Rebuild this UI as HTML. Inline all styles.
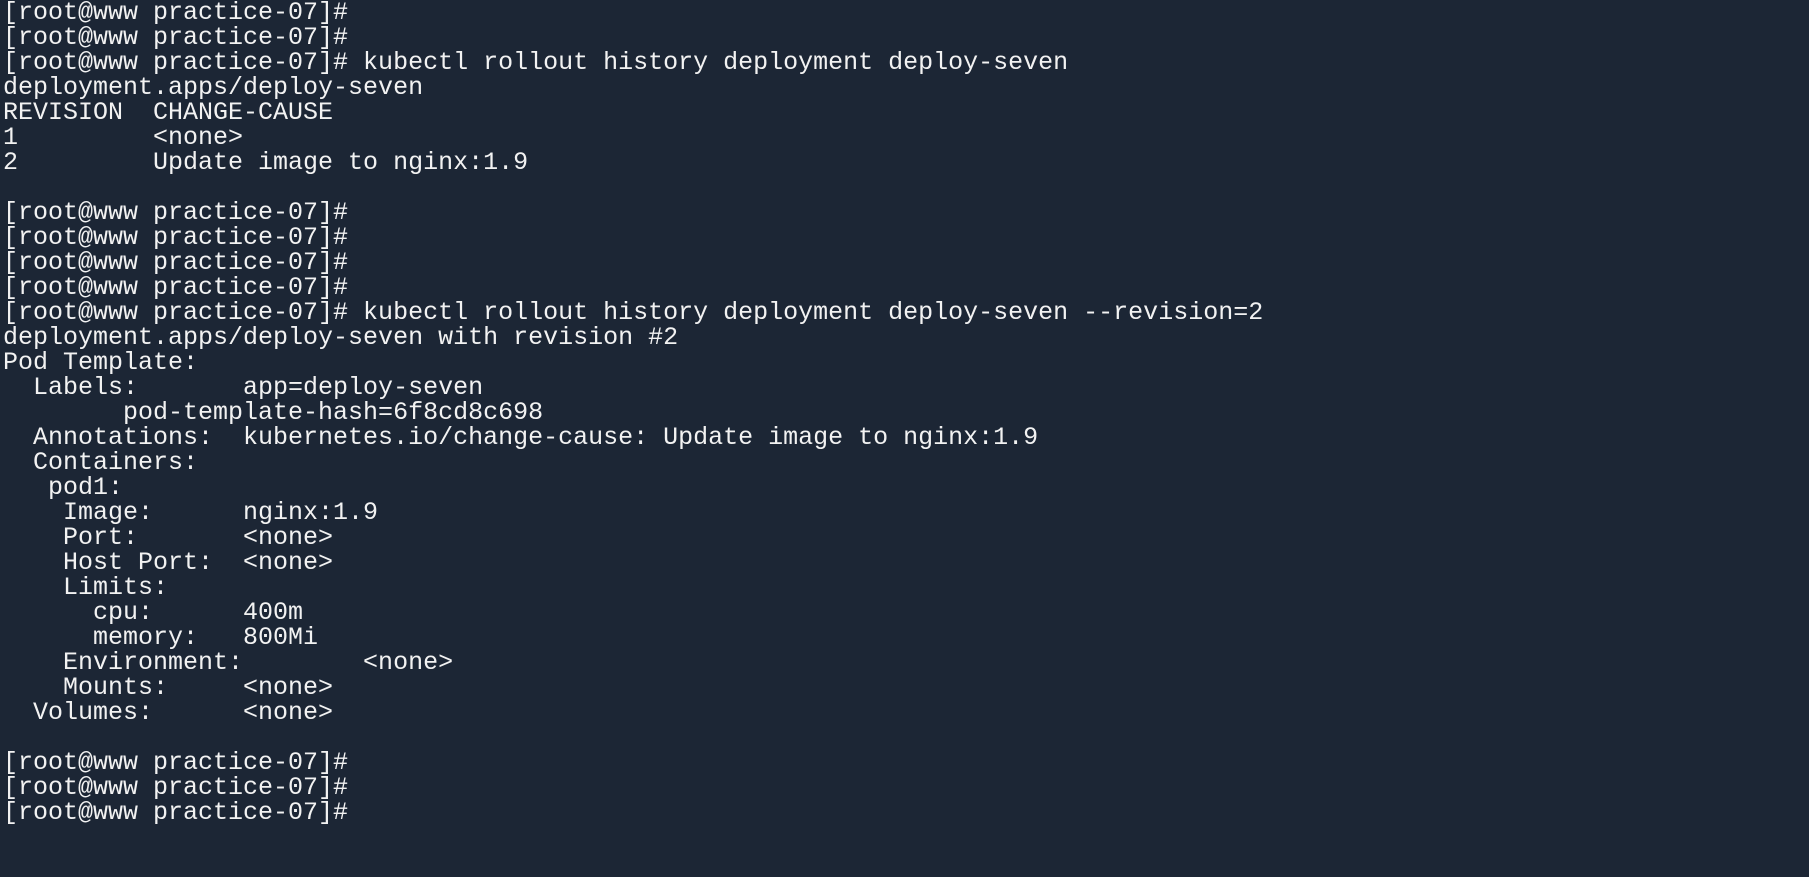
<!DOCTYPE html>
<html><head><meta charset="utf-8"><style>
html,body{margin:0;padding:0;width:1809px;height:877px;overflow:hidden;background:#1c2635;}
pre{margin:0;padding:0 0 0 3px;font-family:"Liberation Mono",monospace;font-size:25px;line-height:25px;color:#f2f2f2;}
</style></head><body><pre>[root@www practice-07]#
[root@www practice-07]#
[root@www practice-07]# kubectl rollout history deployment deploy-seven
deployment.apps/deploy-seven
REVISION  CHANGE-CAUSE
1         &lt;none&gt;
2         Update image to nginx:1.9

[root@www practice-07]#
[root@www practice-07]#
[root@www practice-07]#
[root@www practice-07]#
[root@www practice-07]# kubectl rollout history deployment deploy-seven --revision=2
deployment.apps/deploy-seven with revision #2
Pod Template:
  Labels:       app=deploy-seven
        pod-template-hash=6f8cd8c698
  Annotations:  kubernetes.io/change-cause: Update image to nginx:1.9
  Containers:
   pod1:
    Image:      nginx:1.9
    Port:       &lt;none&gt;
    Host Port:  &lt;none&gt;
    Limits:
      cpu:      400m
      memory:   800Mi
    Environment:        &lt;none&gt;
    Mounts:     &lt;none&gt;
  Volumes:      &lt;none&gt;

[root@www practice-07]#
[root@www practice-07]#
[root@www practice-07]#
</pre></body></html>
